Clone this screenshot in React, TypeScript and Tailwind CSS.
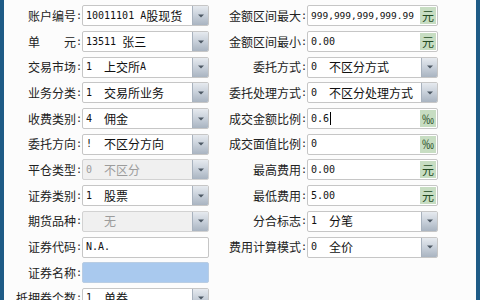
import React from "react";

const CJK = "[font-family:'Noto_Sans_CJK_SC',sans-serif]";
const MONO = "[font-family:'DejaVu_Sans_Mono',monospace]";

type FieldKind = "select" | "text" | "unit" | "blue";

type Row = {
  label: string;
  value?: string;
  kind: FieldKind;
  unit?: string;
  disabled?: boolean;
  cursor?: boolean;
  tight?: boolean;
};

const leftRows: Row[] = [
  { label: "账户编号", value: "10011101 A股现货", kind: "select" },
  { label: "单元", value: "13511 张三", kind: "select" },
  { label: "交易市场", value: "1  上交所A", kind: "select" },
  { label: "业务分类", value: "1  交易所业务", kind: "select" },
  { label: "收费类别", value: "4  佣金", kind: "select" },
  { label: "委托方向", value: "!  不区分方向", kind: "select" },
  { label: "平仓类型", value: "0  不区分", kind: "select", disabled: true },
  { label: "证券类别", value: "1  股票", kind: "select" },
  { label: "期货品种", value: "   无", kind: "select", disabled: true },
  { label: "证券代码", value: "N.A.", kind: "text" },
  { label: "证券名称", value: "", kind: "blue" },
  { label: "抵押券个数", value: "1  单券", kind: "select" },
];

const rightRows: Row[] = [
  { label: "金额区间最大", value: "999,999,999,999.99", kind: "unit", unit: "元", tight: true },
  { label: "金额区间最小", value: "0.00", kind: "unit", unit: "元" },
  { label: "委托方式", value: "0  不区分方式", kind: "select" },
  { label: "委托处理方式", value: "0  不区分处理方式", kind: "select" },
  { label: "成交金额比例", value: "0.6", kind: "unit", unit: "‰", cursor: true },
  { label: "成交面值比例", value: "0", kind: "unit", unit: "‰" },
  { label: "最高费用", value: "0.00", kind: "unit", unit: "元" },
  { label: "最低费用", value: "5.00", kind: "unit", unit: "元" },
  { label: "分合标志", value: "1  分笔", kind: "select" },
  { label: "费用计算模式", value: "0  全价", kind: "select" },
];

function Val({ text, tight }: { text: string; tight?: boolean }) {
  const parts = text.split(/([\x20-\x7e]+)/).filter(Boolean);
  return (
    <>
      {parts.map((p, i) =>
        /^[\x20-\x7e]+$/.test(p) ? (
          <span key={i} className={`${MONO} ${tight ? "text-[9.5px]" : "text-[10px]"}`}>
            {p}
          </span>
        ) : (
          <span key={i} className="text-[12px]">
            {p}
          </span>
        )
      )}
    </>
  );
}

function Arrow() {
  return (
    <div className="flex h-full w-[16px] shrink-0 items-center justify-center border-l border-[#a8b2be] bg-gradient-to-b from-[#e6eaef] via-[#c8d0da] to-[#a9b4c1]">
      <svg width="6" height="4" viewBox="0 0 6 4">
        <path d="M0 0.5 L6 0.5 L3 3.5 Z" fill="#4d5864" />
      </svg>
    </div>
  );
}

function Field({ row }: { row: Row }) {
  const bg =
    row.kind === "blue"
      ? "bg-[#a9c9ee] border-[#b9cde3]"
      : row.disabled
      ? "bg-[#f0f0f0] border-[#d2d2d2] text-[#9c9c9c]"
      : "bg-white border-[#c6c6c6] text-[#111]";
  return (
    <div className={`flex h-[21px] flex-1 items-center overflow-hidden rounded-[2px] border ${bg}`}>
      <div className="flex flex-1 items-center whitespace-pre pl-[3px] leading-none">
        {row.value ? <Val text={row.value} tight={row.tight} /> : null}
        {row.cursor ? <span className="ml-px inline-block h-[13px] w-px bg-black" /> : null}
      </div>
      {row.kind === "select" && <Arrow />}
      {row.kind === "unit" && (
        <div className="mr-px flex h-[17px] w-[16px] shrink-0 items-center justify-center bg-[#c7ddc2] text-[12px] leading-none text-[#234a23]">
          {row.unit}
        </div>
      )}
    </div>
  );
}

function Label({ text, width }: { text: string; width: string }) {
  return (
    <div className={`${width} flex shrink-0 items-center justify-end text-[12px] leading-none text-[#222]`}>
      {text === "单元" ? (
        <span className="flex w-[48px] justify-between">
          <span>单</span>
          <span>元</span>
        </span>
      ) : (
        <span>{text}</span>
      )}
      <span className={`${MONO} text-[10px]`}>:</span>
    </div>
  );
}

export default function App() {
  return (
    <div className={`${CJK} flex h-[300px] w-[480px] overflow-hidden bg-[#fcfcfc]`}>
      <div className="w-[4px] shrink-0 bg-[#1f5b86]" />
      <div className="flex flex-1 pt-[3px]">
        <div className="flex w-[205px] flex-col">
          {leftRows.map((r) => (
            <div key={r.label} className="flex h-[25.7px] shrink-0 items-center">
              <Label text={r.label} width="w-[78px]" />
              <Field row={r} />
            </div>
          ))}
        </div>
        <div className="ml-[1px] flex w-[228px] flex-col">
          {rightRows.map((r) => (
            <div key={r.label} className="flex h-[25.7px] shrink-0 items-center">
              <Label text={r.label} width="w-[97px]" />
              <Field row={r} />
            </div>
          ))}
        </div>
      </div>
      <div className="w-[4px] shrink-0 bg-[#1f5b86]" />
    </div>
  );
}
